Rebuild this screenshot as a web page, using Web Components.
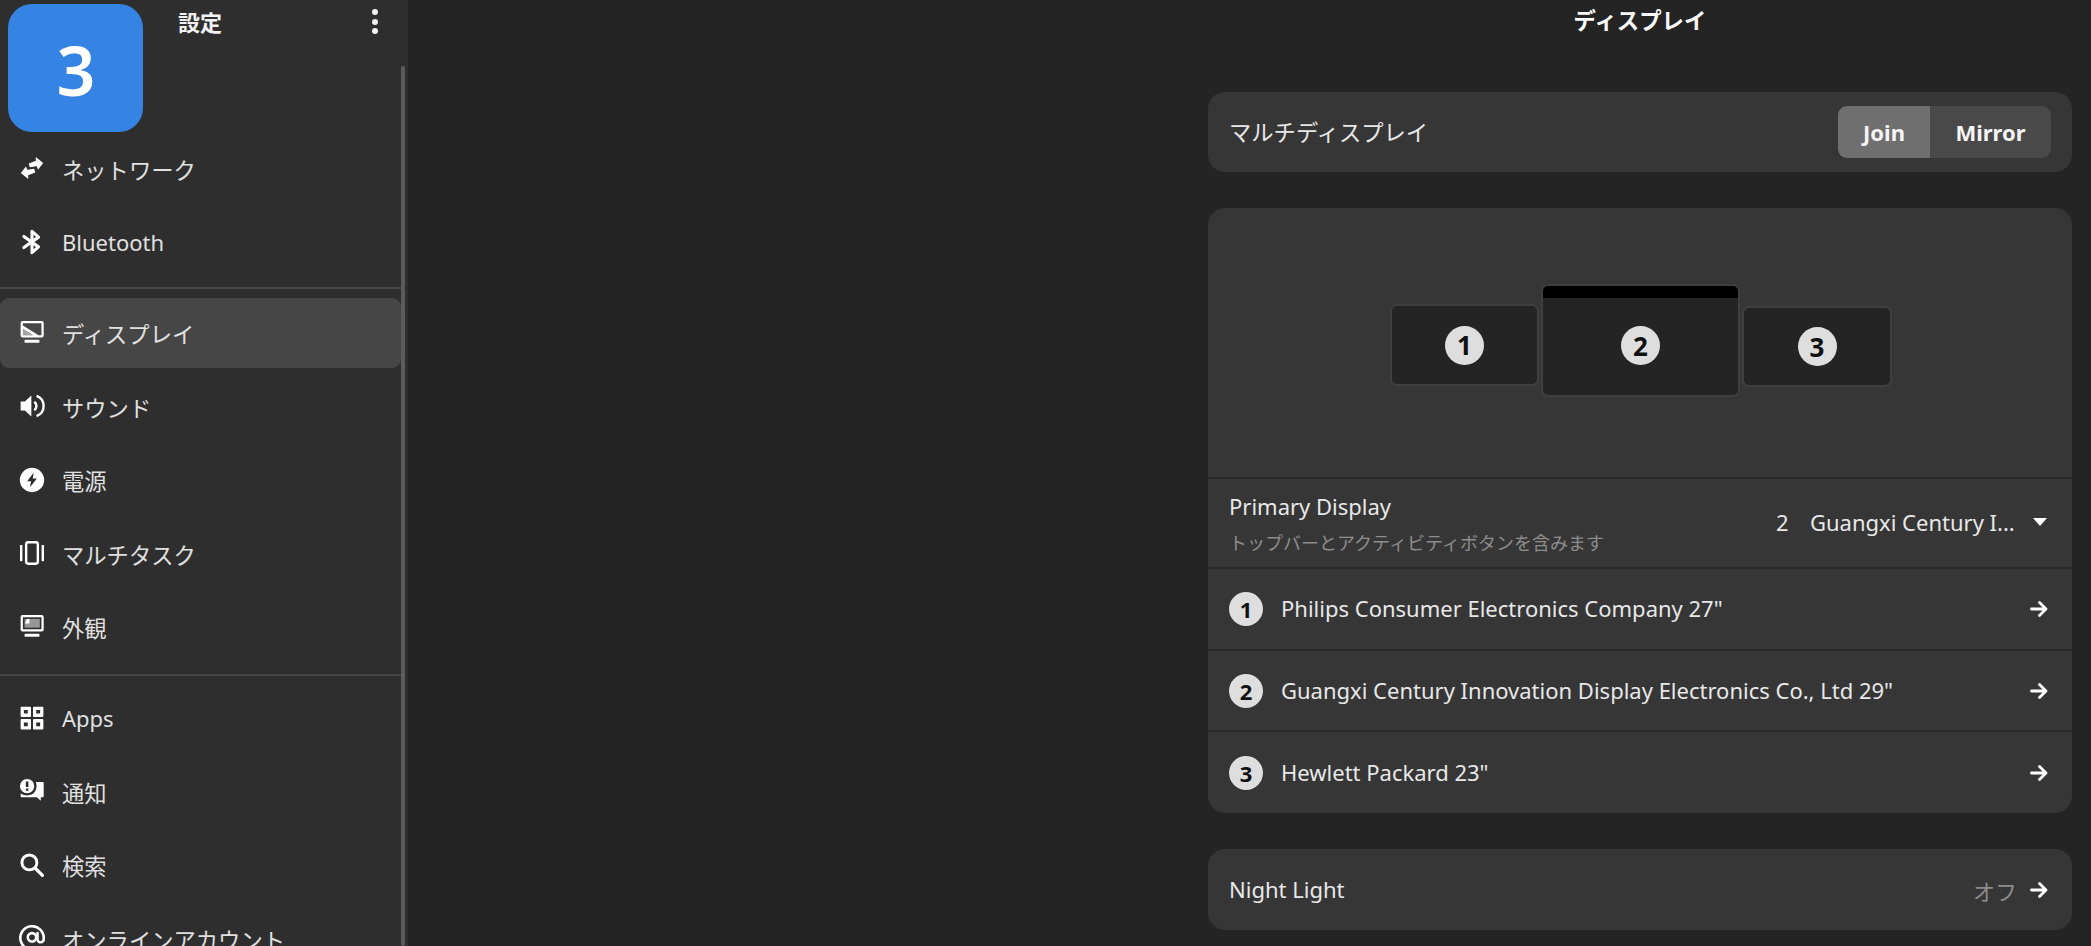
<!DOCTYPE html>
<html lang="ja">
<head>
<meta charset="utf-8">
<title>設定</title>
<style>
  html, body { margin: 0; height: 100%; background: #242424; overflow: hidden; }
  body {
    font-family: "Noto Sans", "Noto Sans CJK JP", sans-serif;
    font-size: 22px;
    color: #e6e6e6;
  }
</style>
</head>
<body>

<settings-window>
  <settings-sidebar slot="sidebar">
    <nav-group style="padding-bottom:10.3px;margin-bottom:9px">
      <nav-row icon="network">ネットワーク</nav-row>
      <nav-row icon="bluetooth">Bluetooth</nav-row>
    </nav-group>
    <nav-group style="padding-bottom:12.4px;margin-bottom:7px">
      <nav-row icon="display" selected>ディスプレイ</nav-row>
      <nav-row icon="sound">サウンド</nav-row>
      <nav-row icon="power">電源</nav-row>
      <nav-row icon="multitask">マルチタスク</nav-row>
      <nav-row icon="appearance">外観</nav-row>
    </nav-group>
    <nav-group>
      <nav-row icon="apps">Apps</nav-row>
      <nav-row icon="notifications">通知</nav-row>
      <nav-row icon="search">検索</nav-row>
      <nav-row icon="accounts">オンラインアカウント</nav-row>
    </nav-group>
  </settings-sidebar>

  <display-page slot="main">
    <list-card>
      <list-row height="80">
        <span style="font-size:22.3px">マルチディスプレイ</span>
        <seg-toggle slot="end"></seg-toggle>
      </list-row>
    </list-card>

    <list-card>
      <monitor-layout></monitor-layout>
      <list-row height="90">
        Primary Display
        <span slot="sub">トップバーとアクティビティボタンを含みます</span>
        <primary-select slot="end"></primary-select>
      </list-row>
      <list-row height="82">
        <num-badge slot="start" size="34">1</num-badge>
        Philips Consumer Electronics Company 27"
        <row-arrow slot="end"></row-arrow>
      </list-row>
      <list-row height="81">
        <num-badge slot="start" size="34">2</num-badge>
        Guangxi Century Innovation Display Electronics Co., Ltd 29"
        <row-arrow slot="end"></row-arrow>
      </list-row>
      <list-row height="81">
        <num-badge slot="start" size="34">3</num-badge>
        Hewlett Packard 23"
        <row-arrow slot="end"></row-arrow>
      </list-row>
    </list-card>

    <list-card>
      <list-row height="81">
        Night Light
        <span slot="end" style="color:#8b8b8b">オフ</span>
        <row-arrow slot="end"></row-arrow>
      </list-row>
    </list-card>
  </display-page>
</settings-window>

<script>
// Symbolic icons, 16x16 grid
const ICONS = {
  network: '<path d="M10.3 1.2 14.9 4.9 11.7 9 10.9 6.9 6.6 7.6 6 5.2 10.4 3.6Z"/><path d="M5.7 14.8 1.1 11.1 4.3 7 5.1 9.1 9.4 8.4 10 10.8 5.6 12.4Z"/>',
  bluetooth: '<path fill="none" stroke="currentColor" stroke-width="1.9" stroke-linejoin="round" stroke-linecap="round" d="M3 4.6 12 11 8 14.6V1.4L12 5 3 11.4"/>',
  display: '<path fill-rule="evenodd" d="M2.2 .6H14a1.2 1.2 0 0 1 1.2 1.2V9.6a1.2 1.2 0 0 1-1.2 1.2H2.2A1.2 1.2 0 0 1 1 9.6V1.8A1.2 1.2 0 0 1 2.2 .6ZM2.4 2V3.4L12 9.4H13.8V2ZM2.4 5.4V9.4H8.8Z"/><path opacity=".5" d="M2.4 5.4V9.4H8.8Z"/><rect x="3.4" y="12.2" width="9.2" height="1.8" rx=".5"/>',
  sound: '<path d="M1 5.2H3.6L7.6 1.6V14.4L3.6 10.8H1Z"/><path fill="none" stroke="currentColor" stroke-width="1.5" d="M9.4 5.4a3.2 3.2 0 0 1 0 5.2M10.8 1.8a6.6 6.6 0 0 1 0 12.4"/>',
  power: '<path fill-rule="evenodd" d="M8 .5a7.5 7.5 0 1 1 0 15 7.5 7.5 0 0 1 0-15ZM9 3.6 5 8.8H7.4L6.8 12.4 11 7H8.5Z"/>',
  multitask: '<rect x=".6" y="3" width="1.5" height="10" rx=".4"/><rect x="13.9" y="3" width="1.5" height="10" rx=".4"/><rect x="4.4" y="1.4" width="7.2" height="13.2" rx="1.3" fill="none" stroke="currentColor" stroke-width="1.5"/>',
  appearance: '<path fill-rule="evenodd" d="M2.2 .6H14a1.2 1.2 0 0 1 1.2 1.2V9.6a1.2 1.2 0 0 1-1.2 1.2H2.2A1.2 1.2 0 0 1 1 9.6V1.8A1.2 1.2 0 0 1 2.2 .6ZM2.4 2V9.4H13.8V2Z"/><rect x="3.4" y="3" width="9.4" height="5.4" opacity=".5"/><path d="M5 3H6.4V5.8H3.6Z"/><rect x="3.4" y="12.2" width="9.2" height="1.8" rx=".5"/>',
  apps: '<path fill-rule="evenodd" d="M1.6 1H6.8a.6.6 0 0 1 .6.6V6.8a.6.6 0 0 1-.6.6H1.6A.6.6 0 0 1 1 6.8V1.6A.6.6 0 0 1 1.6 1ZM3 3V5.2H5.4V3ZM9.2 1H14.4a.6.6 0 0 1 .6.6V6.8a.6.6 0 0 1-.6.6H9.2a.6.6 0 0 1-.6-.6V1.6a.6.6 0 0 1 .6-.6ZM10.6 3V5.2H13V3ZM1.6 8.6H6.8a.6.6 0 0 1 .6.6V14.4a.6.6 0 0 1-.6.6H1.6a.6.6 0 0 1-.6-.6V9.2a.6.6 0 0 1 .6-.6ZM3 10.8V13H5.4V10.8ZM9.2 8.6H14.4a.6.6 0 0 1 .6.6V14.4a.6.6 0 0 1-.6.6H9.2a.6.6 0 0 1-.6-.6V9.2a.6.6 0 0 1 .6-.6ZM10.6 10.8V13H13V10.8Z"/>',
  notifications: '<path fill-rule="evenodd" d="M5 .6a4.4 4.4 0 0 1 4.4 4.4A4.4 4.4 0 0 1 5 9.4 4.4 4.4 0 0 1 .6 5 4.4 4.4 0 0 1 5 .6ZM4.2 2.2V5.6H5.8V2.2ZM4.2 6.4V7.8H5.8V6.4Z"/><path d="M10.4 2.4H14.6a.6.6 0 0 1 .6.6V11.2a.6.6 0 0 1-.6.6H13.4V14L11 11.8H1.6a.6.6 0 0 1-.6-.6V9.6C3 11 8 11.6 10 8.2 11 6.4 11 4 10.4 2.4Z"/>',
  search: '<circle cx="6.4" cy="6.4" r="4.6" fill="none" stroke="currentColor" stroke-width="1.8"/><path fill="none" stroke="currentColor" stroke-width="2" stroke-linecap="round" d="M10 10 14.4 14.4"/>',
  accounts: '<circle cx="8" cy="7.6" r="2.6" fill="none" stroke="currentColor" stroke-width="1.6"/><path fill="none" stroke="currentColor" stroke-width="1.6" stroke-linecap="round" d="M11.4 5V9A1.9 1.9 0 0 0 15.2 8.4 7.2 7.2 0 1 0 11.6 14.2"/>'
};

class SettingsWindow extends HTMLElement {
  constructor() {
    super();
    this.attachShadow({ mode: 'open' });
    this.shadowRoot.innerHTML = `
      <style>
        :host { display: flex; height: 946px; overflow: hidden; position: relative; }
        ::slotted([slot=sidebar]) { flex: 0 0 408px; }
        ::slotted([slot=main]) { flex: 1; min-width: 0; }
      </style>
      <slot name="sidebar"></slot>
      <slot name="main"></slot>
    `;
  }
}

class SettingsSidebar extends HTMLElement {
  constructor() {
    super();
    this.attachShadow({ mode: 'open' });
    this.shadowRoot.innerHTML = `
      <style>
        :host { display: flex; flex-direction: column; background: #2e2e2e; position: relative; overflow: hidden; height: 946px; }
        .head { flex: none; height: 66px; display: flex; padding: 0 0 0 178px; box-sizing: border-box; }
        .title { font-weight: 700; font-size: 22px; color: #f2f2f2; line-height: 44px; flex: 1; }
        .menu { width: 6px; margin: 9px 30px 0 0; display: flex; flex-direction: column; gap: 3.5px; }
        .menu i { width: 6px; height: 6px; border-radius: 50%; background: #f2f2f2; }
        .list { padding-top: 67.3px; display: flex; flex-direction: column; width: 401px; }
        /* overlay counter from the window switcher */
        .overlay {
          position: absolute; left: 8px; top: 4px; width: 135px; height: 128px; padding: 3px 0 0 1px; box-sizing: border-box;
          background: #3584e4; border-radius: 24px; color: #fff;
          display: flex; align-items: center; justify-content: center;
          font-size: 68px; font-weight: 600; line-height: 1;
        }
        .thumb { position: absolute; left: 401px; top: 66px; bottom: 0; width: 4px; background: #5c5c5c; border-radius: 2px; }
      </style>
      <div class="head"><div class="title">設定</div><div class="menu"><i></i><i></i><i></i></div></div>
      <div class="list"><slot></slot></div>
      <div class="overlay">3</div>
      <div class="thumb"></div>
    `;
  }
}

class NavGroup extends HTMLElement {
  constructor() {
    super();
    this.attachShadow({ mode: 'open' });
    this.shadowRoot.innerHTML = `
      <style>
        :host { display: flex; flex-direction: column; gap: 3.4px; border-bottom: 2px solid #454545; }
        :host(:last-child) { border-bottom: 0; }
      </style>
      <slot></slot>
    `;
  }
}

class NavRow extends HTMLElement {
  constructor() {
    super();
    this.attachShadow({ mode: 'open' });
    const icon = ICONS[this.getAttribute('icon')] || '';
    // Japanese labels sit a bit lower and wider than the latin ones
    const cjk = /[^\x00-\x7f]/.test(this.textContent);
    this.shadowRoot.innerHTML = `
      <style>
        :host { display: flex; align-items: center; height: 70px; flex: none; padding-left: 19px; gap: 17px; border-radius: 9px; color: #e0e0e0; white-space: nowrap; }
        :host([selected]) { background: #464646; }
        svg { width: 26px; height: 26px; fill: #fff; color: #fff; flex: none; }
        .cjk { font-size: 22.3px; padding-top: 2px; }
      </style>
      <svg viewBox="0 0 16 16">${icon}</svg>
      <span class="${cjk ? 'cjk' : ''}"><slot></slot></span>
    `;
  }
}

class DisplayPage extends HTMLElement {
  constructor() {
    super();
    this.attachShadow({ mode: 'open' });
    this.shadowRoot.innerHTML = `
      <style>
        :host { display: flex; flex-direction: column; align-items: center; background: #242424; height: 946px; overflow: hidden; padding-left: 781px; box-sizing: border-box; }
        .title { flex: none; height: 92px; box-sizing: border-box; width: 100%; text-align: center; font-weight: 700; font-size: 22.4px; line-height: 42px; color: #fafafa; }
        .clamp { width: 864px; display: flex; flex-direction: column; gap: 36px; }
      </style>
      <div class="title">ディスプレイ</div>
      <div class="clamp"><slot></slot></div>
    `;
  }
}

class ListCard extends HTMLElement {
  constructor() {
    super();
    this.attachShadow({ mode: 'open' });
    this.shadowRoot.innerHTML = `
      <style>
        :host { display: block; background: #363636; border-radius: 17px; overflow: hidden; }
        ::slotted(*:not(:last-child)) { border-bottom: 2px solid #2a2a2a; }
      </style>
      <slot></slot>
    `;
  }
}

class ListRow extends HTMLElement {
  constructor() {
    super();
    this.attachShadow({ mode: 'open' });
    const h = this.getAttribute('height') || 80;
    this.shadowRoot.innerHTML = `
      <style>
        :host { display: flex; align-items: center; height: ${h}px; box-sizing: border-box; padding: 0 21px; color: #e8e8e8; }
        .start { display: flex; }
        ::slotted([slot=start]) { margin-right: 18px; }
        .text { flex: 1; min-width: 0; display: flex; flex-direction: column; white-space: nowrap; padding-bottom: 2px; }
        ::slotted([slot=sub]) { display: block; font-size: 18px; color: #8d8d8d; line-height: 25px; margin-top: 10px; margin-bottom: -2px; }
        .end { display: flex; align-items: center; gap: 10px; }
      </style>
      <div class="start"><slot name="start"></slot></div>
      <div class="text"><span><slot></slot></span><slot name="sub"></slot></div>
      <div class="end"><slot name="end"></slot></div>
    `;
  }
}

class SegToggle extends HTMLElement {
  constructor() {
    super();
    this.attachShadow({ mode: 'open' });
    this.shadowRoot.innerHTML = `
      <style>
        :host { display: flex; height: 52px; border-radius: 9px; overflow: hidden; font-weight: 700; font-size: 22px; color: #f5f5f5; }
        div { display: flex; align-items: center; justify-content: center; }
        .join { width: 92px; background: #6f6f6f; }
        .mirror { width: 121px; background: #494949; }
      </style>
      <div class="join">Join</div><div class="mirror">Mirror</div>
    `;
  }
}

class NumBadge extends HTMLElement {
  constructor() {
    super();
    this.attachShadow({ mode: 'open' });
    const s = this.getAttribute('size') || 34;
    this.shadowRoot.innerHTML = `
      <style>
        :host { display: flex; align-items: center; justify-content: center; width: ${s}px; height: ${s}px; border-radius: 50%; background: #dedede; color: #111; font-weight: 700; font-size: ${Math.round(s * 0.66)}px; line-height: 1; flex: none; }
      </style>
      <slot></slot>
    `;
  }
}

class RowArrow extends HTMLElement {
  constructor() {
    super();
    this.attachShadow({ mode: 'open' });
    this.shadowRoot.innerHTML = `
      <style>
        :host { display: flex; }
        svg { width: 24px; height: 24px; }
      </style>
      <svg viewBox="0 0 24 24"><path fill="none" stroke="#fff" stroke-width="2.8" stroke-linecap="round" stroke-linejoin="round" d="M4.5 12H18M12.5 5.5 19 12 12.5 18.5"/></svg>
    `;
  }
}

class PrimarySelect extends HTMLElement {
  constructor() {
    super();
    this.attachShadow({ mode: 'open' });
    this.shadowRoot.innerHTML = `
      <style>
        :host { display: flex; align-items: center; white-space: nowrap; margin-right: 4px; padding-bottom: 2px; }
        .num { width: 34px; }
        .name { width: 223px; }
        svg { width: 14px; height: 8px; }
      </style>
      <span class="num">2</span><span class="name">Guangxi Century I...</span>
      <svg viewBox="0 0 14 8"><path fill="#fff" d="M0 0H14L7 8Z"/></svg>
    `;
  }
}

class MonitorLayout extends HTMLElement {
  constructor() {
    super();
    this.attachShadow({ mode: 'open' });
    // free canvas: monitors sit where the user dragged them
    const mons = [
      { n: 1, x: 182, y: 96, w: 149, h: 82 },
      { n: 2, x: 333, y: 76, w: 199, h: 113, primary: true },
      { n: 3, x: 534, y: 98, w: 150, h: 81 }
    ];
    const html = mons.map(m => `
      <div class="mon" style="left:${m.x}px;top:${m.y}px;width:${m.w}px;height:${m.h}px">
        ${m.primary ? '<div class="bar"></div>' : ''}
        <num-badge size="39">${m.n}</num-badge>
      </div>`).join('');
    this.shadowRoot.innerHTML = `
      <style>
        :host { display: block; position: relative; height: 269px; }
        .mon { position: absolute; box-sizing: border-box; background: #242424; border: 2px solid #3f3f3f; border-radius: 7px; overflow: hidden; display: flex; align-items: center; justify-content: center; }
        .bar { position: absolute; left: -2px; right: -2px; top: -2px; height: 14px; background: #000; }
        .mon:has(.bar) num-badge { margin-top: 10px; }
      </style>
      ${html}
    `;
  }
}

customElements.define('settings-window', SettingsWindow);
customElements.define('settings-sidebar', SettingsSidebar);
customElements.define('nav-group', NavGroup);
customElements.define('nav-row', NavRow);
customElements.define('display-page', DisplayPage);
customElements.define('list-card', ListCard);
customElements.define('list-row', ListRow);
customElements.define('seg-toggle', SegToggle);
customElements.define('num-badge', NumBadge);
customElements.define('row-arrow', RowArrow);
customElements.define('primary-select', PrimarySelect);
customElements.define('monitor-layout', MonitorLayout);
</script>
</body>
</html>
